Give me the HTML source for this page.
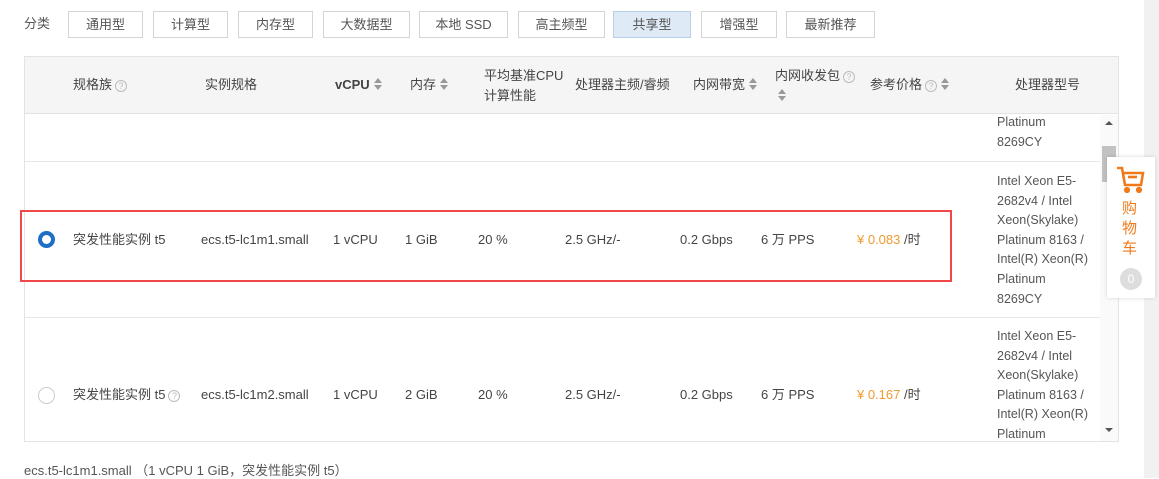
<!DOCTYPE html>
<html><head><meta charset="utf-8"><style>
*{margin:0;padding:0;box-sizing:border-box}
body{width:1159px;height:478px;background:#fff;font-family:"Liberation Sans","Noto Sans CJK SC",sans-serif;font-size:13px;color:#444;position:relative;overflow:hidden}
.a{position:absolute;white-space:nowrap;line-height:16px}
.btn{position:absolute;top:11px;height:27px;border:1px solid #d5d5d5;background:#fff;text-align:center;line-height:25px;font-size:13px;color:#555}
.sel{background:#dfeaf7;border-color:#b7cfe8}
.h{color:#444}
.q{display:inline-block;width:12px;height:12px;border:1px solid #bbb;border-radius:50%;font-size:9px;line-height:10px;text-align:center;color:#bbb;vertical-align:0;margin-left:3px}
.s{display:inline-block;width:8px;height:12px;vertical-align:-1px;margin-left:4px;position:relative}
.s:before{content:"";position:absolute;left:0;top:0;border:4px solid transparent;border-bottom:5px solid #999;border-top:0}
.s:after{content:"";position:absolute;left:0;top:7px;border:4px solid transparent;border-top:5px solid #999;border-bottom:0}
.p{position:absolute;left:997px;font-size:12.5px;line-height:19.6px;color:#555;white-space:nowrap}
.or{color:#f29a2e}
</style></head><body>
<div class="a" style="left:24px;top:16px;color:#555">分类</div>
<div class="btn" style="left:68px;width:75px">通用型</div>
<div class="btn" style="left:153px;width:75px">计算型</div>
<div class="btn" style="left:238px;width:75px">内存型</div>
<div class="btn" style="left:323px;width:87px">大数据型</div>
<div class="btn" style="left:419px;width:89px">本地 SSD</div>
<div class="btn" style="left:518px;width:87px">高主频型</div>
<div class="btn sel" style="left:613px;width:78px">共享型</div>
<div class="btn" style="left:701px;width:76px">增强型</div>
<div class="btn" style="left:786px;width:89px">最新推荐</div>

<div class="a" style="left:1144px;top:0;width:15px;height:478px;background:#f1f1f1"></div>

<div class="a" style="left:24px;top:56px;width:1095px;height:386px;border:1px solid #e3e3e3"></div>
<div class="a" style="left:25px;top:57px;width:1093px;height:57px;background:#f5f5f5;border-bottom:1px solid #e3e3e3"></div>
<div class="a h" style="left:73px;top:77px">规格族<span class="q">?</span></div>
<div class="a h" style="left:205px;top:77px">实例规格</div>
<div class="a h" style="left:335px;top:77px;font-weight:bold">vCPU<span class="s"></span></div>
<div class="a h" style="left:410px;top:77px">内存<span class="s"></span></div>
<div class="a h" style="left:484px;top:66px;line-height:20px">平均基准CPU<br>计算性能</div>
<div class="a h" style="left:575px;top:77px">处理器主频/睿频</div>
<div class="a h" style="left:693px;top:77px">内网带宽<span class="s"></span></div>
<div class="a h" style="left:775px;top:66px;line-height:20px">内网收发包<span class="q">?</span><br><span class="s" style="margin-left:3px"></span></div>
<div class="a h" style="left:870px;top:77px">参考价格<span class="q">?</span><span class="s"></span></div>
<div class="a h" style="left:1015px;top:77px">处理器型号</div>

<div class="p" style="top:113px">Platinum<br>8269CY</div>
<div class="a" style="left:25px;top:161px;width:1075px;height:1px;background:#e6e6e6"></div>
<div class="p" style="top:172px">Intel Xeon E5-<br>2682v4 / Intel<br>Xeon(Skylake)<br>Platinum 8163 /<br>Intel(R) Xeon(R)<br>Platinum<br>8269CY</div>
<div class="a" style="left:25px;top:317px;width:1075px;height:1px;background:#e6e6e6"></div>
<div class="p" style="top:327px">Intel Xeon E5-<br>2682v4 / Intel<br>Xeon(Skylake)<br>Platinum 8163 /<br>Intel(R) Xeon(R)<br>Platinum</div>

<div class="a" style="left:20px;top:210px;width:932px;height:72px;border:2px solid #f04848"></div>
<div class="a" style="left:38px;top:231px;width:17px;height:17px;border-radius:50%;border:4px solid #1f6fc5;background:#fff"></div>
<div class="a" style="left:73px;top:232px">突发性能实例 t5</div>
<div class="a" style="left:201px;top:232px">ecs.t5-lc1m1.small</div>
<div class="a" style="left:333px;top:232px">1 vCPU</div>
<div class="a" style="left:405px;top:232px">1 GiB</div>
<div class="a" style="left:478px;top:232px">20 %</div>
<div class="a" style="left:565px;top:232px">2.5 GHz/-</div>
<div class="a" style="left:680px;top:232px">0.2 Gbps</div>
<div class="a" style="left:761px;top:232px">6 万 PPS</div>
<div class="a" style="left:857px;top:232px"><span class="or">¥ 0.083</span> /时</div>

<div class="a" style="left:38px;top:387px;width:17px;height:17px;border-radius:50%;border:1px solid #ccc"></div>
<div class="a" style="left:73px;top:387px">突发性能实例 t5<span class="q">?</span></div>
<div class="a" style="left:201px;top:387px">ecs.t5-lc1m2.small</div>
<div class="a" style="left:333px;top:387px">1 vCPU</div>
<div class="a" style="left:405px;top:387px">2 GiB</div>
<div class="a" style="left:478px;top:387px">20 %</div>
<div class="a" style="left:565px;top:387px">2.5 GHz/-</div>
<div class="a" style="left:680px;top:387px">0.2 Gbps</div>
<div class="a" style="left:761px;top:387px">6 万 PPS</div>
<div class="a" style="left:857px;top:387px"><span class="or">¥ 0.167</span> /时</div>

<div class="a" style="left:1100px;top:115px;width:18px;height:326px;background:#fafafa"></div>
<div class="a" style="left:1105px;top:121px;border:4px solid transparent;border-bottom:4px solid #555;border-top:0"></div>
<div class="a" style="left:1105px;top:428px;border:4px solid transparent;border-top:4px solid #555;border-bottom:0"></div>
<div class="a" style="left:1102px;top:146px;width:14px;height:36px;background:#c2c2c2"></div>

<div class="a" style="left:1107px;top:157px;width:48px;height:141px;background:#fff;box-shadow:0 0 4px rgba(0,0,0,.15)"></div>
<svg class="a" style="left:1116px;top:165px" width="30" height="30" viewBox="0 0 30 30" fill="none" stroke="#f07a1a" stroke-width="2.6"><path d="M1 3h5l3 17h16l2-12H8"/><path d="M12 12h9"/><circle cx="11" cy="25" r="1.8" fill="#f07a1a"/><circle cx="23" cy="25" r="1.8" fill="#f07a1a"/></svg>
<div class="a" style="left:1122px;top:199px;font-size:15px;line-height:20px;color:#f07a1a;width:18px;white-space:normal">购物车</div>
<div class="a" style="left:1120px;top:268px;width:22px;height:22px;border-radius:50%;background:#ddd;color:#fff;text-align:center;line-height:22px;font-size:12px">0</div>

<div class="a" style="left:24px;top:463px;color:#555">ecs.t5-lc1m1.small （1 vCPU 1 GiB，突发性能实例 t5）</div>
</body></html>
